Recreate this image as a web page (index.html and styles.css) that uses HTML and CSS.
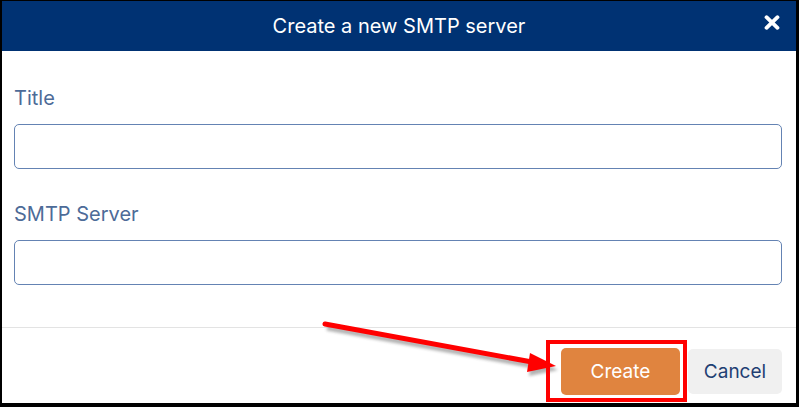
FILE: index.html
```html
<!DOCTYPE html>
<html>
<head>
<meta charset="utf-8">
<link rel="stylesheet" href="styles.css">
</head>
<body>
<div class="frame">
  <div class="header">
    <div class="title">Create a new SMTP server</div>
    <svg class="close" width="16" height="15" viewBox="0 0 16 15">
      <line x1="2.5" y1="2.2" x2="13.5" y2="12.8" stroke="#fff" stroke-width="3.8" stroke-linecap="round"/>
      <line x1="13.5" y1="2.2" x2="2.5" y2="12.8" stroke="#fff" stroke-width="3.8" stroke-linecap="round"/>
    </svg>
  </div>
  <div class="content">
    <div class="field">
      <label class="label">Title</label>
      <div class="input"></div>
    </div>
    <div class="field">
      <label class="label">SMTP Server</label>
      <div class="input"></div>
    </div>
  </div>
  <div class="footer">
    <div class="btn create">Create</div>
    <div class="btn cancel">Cancel</div>
  </div>
  <svg class="annot" width="799" height="407" viewBox="0 0 799 407">
    <defs>
      <filter id="sh" x="-20%" y="-50%" width="140%" height="200%">
        <feGaussianBlur stdDeviation="1.5"/>
      </filter>
    </defs>
    <g opacity="0.45" filter="url(#sh)" transform="translate(2,4)">
      <line x1="325" y1="324" x2="532" y2="362" stroke="#555" stroke-width="5"/>
      <polygon points="556,366 530,353 527,372" fill="#555"/>
    </g>
    <line x1="325" y1="324" x2="532" y2="362" stroke="#ff0000" stroke-width="5" stroke-linecap="round"/>
    <polygon points="556,366 530,353 527,372" fill="#ff0000"/>
    <rect x="548" y="342" width="137" height="58" fill="none" stroke="#ff0000" stroke-width="4"/>
  </svg>
</div>
</body>
</html>
```
FILE: styles.css
```css
html, body {
  margin: 0;
  padding: 0;
  background: #fff;
}
.frame {
  position: relative;
  width: 799px;
  height: 407px;
  box-sizing: border-box;
  border-style: solid;
  border-color: #000;
  border-width: 1px 3px 4px 2px;
  font-family: Inter, "Noto Sans", sans-serif;
  display: flex;
  flex-direction: column;
  overflow: hidden;
}
.header {
  height: 50px;
  background: #003273;
  display: flex;
  align-items: center;
  justify-content: center;
  position: relative;
  flex: none;
}
.title {
  color: #fff;
  font-size: 20px;
}
.close {
  position: absolute;
  right: 16px;
  top: 14px;
}
.content {
  padding: 35px 14px 0 12px;
  height: 277px;
  box-sizing: border-box;
  border-bottom: 1px solid #e3e3e3;
  flex: none;
  display: flex;
  flex-direction: column;
  gap: 33px;
}
.field {
  display: flex;
  flex-direction: column;
}
.label {
  color: #4d6b98;
  font-size: 20px;
  line-height: 24px;
  margin-bottom: 14px;
}
.input {
  height: 45px;
  box-sizing: border-box;
  border: 1px solid #6483b3;
  border-radius: 5px;
}
.footer {
  display: flex;
  justify-content: flex-end;
  align-items: center;
  padding: 20px 14px 0 0;
  gap: 8px;
  flex: none;
}
.btn {
  display: flex;
  align-items: center;
  justify-content: center;
  font-size: 19px;
  border-radius: 5px;
}
.create {
  width: 119px;
  height: 47px;
  background: #e0843f;
  color: #fff;
}
.cancel {
  width: 94px;
  height: 45px;
  background: #f0f0f0;
  color: #1f3f73;
}
.annot {
  position: absolute;
  left: -2px;
  top: -1px;
  pointer-events: none;
}
```
